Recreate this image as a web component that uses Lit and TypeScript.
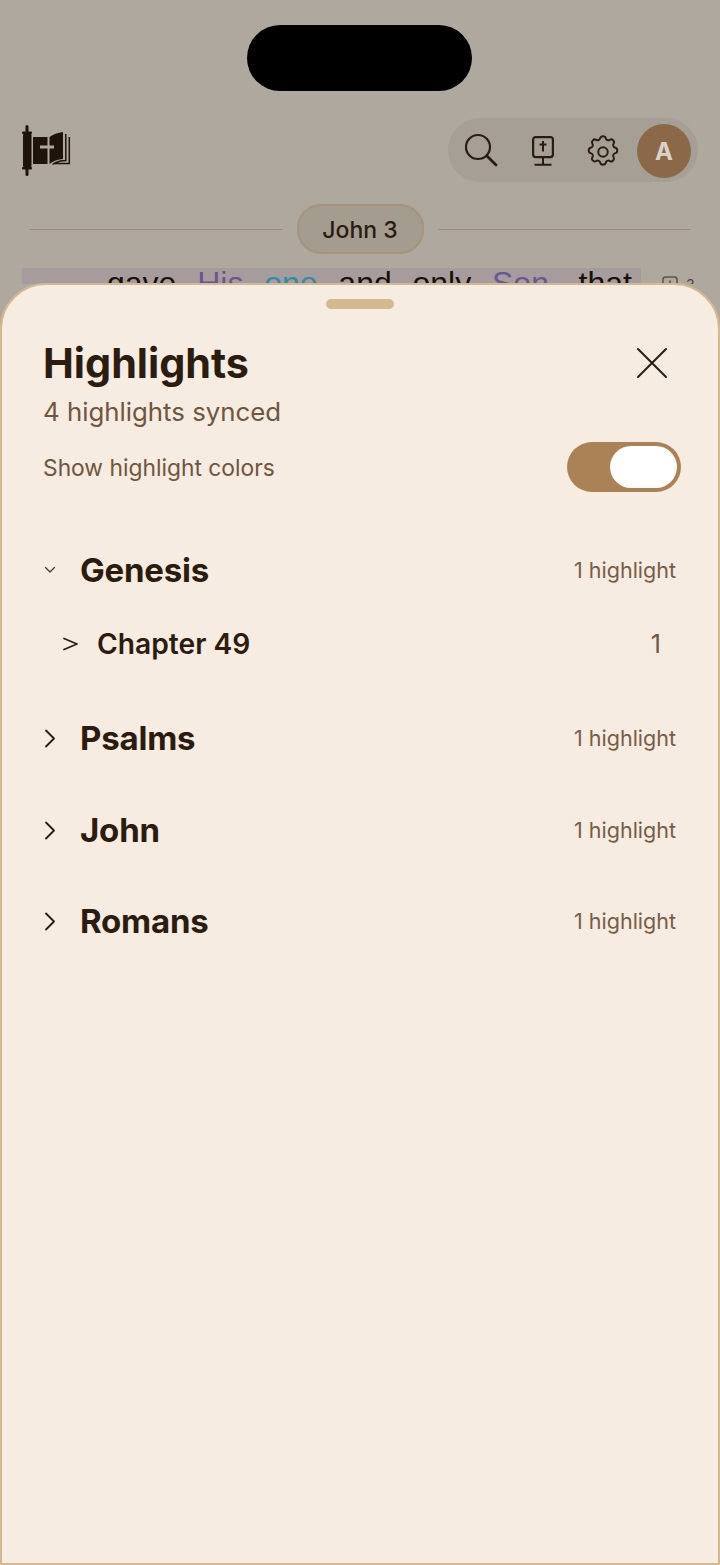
import { LitElement, html, css, svg } from "lit";
import { customElement } from "lit/decorators.js";

const chevronRight = svg`<path d="M2 1.5 L10 9.5 L2 17.5" fill="none" stroke="#2c1c10" stroke-width="1.800" stroke-linecap="round" stroke-linejoin="round"/>`;

@customElement("app-root")
export class AppRoot extends LitElement {
  static styles = css`
    :host { display: block; width: 720px; height: 1565px; position: relative; overflow: hidden; background: #aea89e; font-family: Inter, "Liberation Sans", sans-serif; color: #2c1c10; }
    .back { display: flex; flex-direction: column; height: 284px; overflow: hidden; }
    .island { width: 225px; height: 66px; border-radius: 33px; background: #000; margin: 25px 0 0 247px; flex: none; }
    .top { display: flex; justify-content: space-between; align-items: center; margin-top: 27px; padding: 0 22px; height: 64px; flex: none; }
    .logo { display: block; margin-top: 1px; }
    .tools { width: 250px; height: 64px; border-radius: 32px; background: #a59f95; display: flex; align-items: center; position: relative; }
    .tool { position: absolute; top: 50%; transform: translate(-50%, -50%); display: block; }
    .t-search { left: 33px; }
    .t-screen { left: 94.5px; top: 51%; }
    .t-gear { left: 155px; top: 53%; }
    .avatar { position: absolute; left: 189px; top: 6px; width: 54px; height: 54px; border-radius: 50%; background: #8a6848; color: #d9d2c8; font-size: 24px; font-weight: 700; display: flex; align-items: center; justify-content: center; }
    .chapter { display: flex; align-items: center; padding: 0 29px; margin-top: 22px; height: 50px; flex: none; }
    .rule { flex: 1; height: 1px; background: #9a8d76; }
    .pill { width: 127px; height: 50px; margin: 0 14px; padding-top: 1px; box-sizing: border-box; border: 2px solid #a8937a; border-radius: 24px; background: #a59c90; display: flex; align-items: center; justify-content: center; font-size: 23px; font-weight: 500; color: #2c1c10; }
    .verse { display: flex; margin-top: 14px; padding-left: 22px; flex: none; height: 40px; }
    .line { width: 619px; height: 40px; background: #a69c9e; display: flex; justify-content: space-between; box-sizing: border-box; padding: 0 9px 0 85px; font-family: "Liberation Sans", sans-serif; font-size: 32px; line-height: 30px; color: #17110c; }
    .purple { color: #6a5596; }
    .teal { color: #2a8ca6; }
    .note { display: flex; margin-left: 21px; margin-top: 8px; gap: 8px; color: #4a4036; font-size: 14px; }
    .note svg { display: block; }

    .sheet { position: absolute; left: 0; right: 0; top: 283px; bottom: 0; box-sizing: border-box; background: #f6ece1; border: 2px solid #d5b88f; border-radius: 46px 46px 0 0; padding: 14px 42px 0 41px; display: flex; flex-direction: column; }
    .handle { width: 68px; height: 10px; border-radius: 5px; background: #d5b88f; align-self: center; flex: none; margin-left: 1px; }
    .head { display: flex; justify-content: space-between; align-items: flex-start; margin-top: 32px; }
    h1 { margin: 0; font-size: 41.3px; line-height: 44px; font-weight: 700; color: #2c1c10; }
    .close { display: block; margin: 6px 8px 0 0; }
    .sub { font-size: 25.8px; line-height: 34px; margin-top: 10px; color: #70553f; }
    .toggle-row { display: flex; justify-content: space-between; align-items: center; margin-top: 13px; height: 50px; }
    .toggle-label { font-size: 22.8px; color: #70553f; }
    .toggle { width: 114px; height: 50px; margin-right: -5px; border-radius: 25px; background: #ab8256; padding: 4px; box-sizing: border-box; display: flex; justify-content: flex-end; }
    .knob { width: 67px; height: 42px; border-radius: 21px; background: #fff; }
    .books { display: flex; flex-direction: column; margin: 56px 0 0 1px; }
    .book { display: flex; align-items: center; height: 44px; }
    .chev { width: 36px; flex: none; display: flex; }
    .name { flex: 1; font-size: 33px; font-weight: 700; letter-spacing: -0.2px; color: #2c1c10; }
    .count { font-size: 21.5px; color: #775c47; }
    .chap { display: flex; align-items: center; height: 44px; padding-left: 19px; margin-top: 30px; }
    .chap .chev { width: 34px; }
    .chap-name { flex: 1; font-size: 28.2px; font-weight: 600; color: #2c1c10; }
    .chap-count { font-size: 25px; color: #70553f; margin-right: 15px; }
    .gap-a { margin-top: 50px; }
    .gap-b { margin-top: 48px; }
    .gap-c { margin-top: 47px; }
  `;

  private book(name: string, extra = "", open = false) {
    return html`<div class="book ${extra}">
      <span class="chev">
        ${open
          ? html`<svg width="12" height="8" viewBox="0 0 12 8"><path d="M1.5 1.5 L6 6 L10.5 1.5" fill="none" stroke="#4a3828" stroke-width="1.3" stroke-linecap="round" stroke-linejoin="round"/></svg>`
          : html`<svg width="12" height="19" viewBox="0 0 12 19">${chevronRight}</svg>`}
      </span>
      <span class="name">${name}</span>
      <span class="count">1 highlight</span>
    </div>`;
  }

  render() {
    return html`
      <div class="back">
        <div class="island"></div>
        <div class="top">
          <svg class="logo" width="50" height="52" viewBox="0 0 50 52">
            <g fill="#1f140b">
              <rect x="3.500" y="0" width="3" height="9" rx="1.500"/>
              <rect x="0" y="6.500" width="10" height="2.500" rx="1"/>
              <rect x="1" y="9" width="8.500" height="33" rx="1"/>
              <rect x="0" y="42" width="10" height="2.500" rx="1"/>
              <rect x="3.500" y="42" width="3" height="9" rx="1.500"/>
              <path d="M11 12 H25.500 V39 H11 Z"/>
              <path d="M27.500 12 C31 9.500 36 7.500 41 7 V34 C36 34.500 31 36 27.500 39 Z"/>
            </g>
            <rect x="18" y="20.500" width="14" height="3" fill="#aea89e"/>
            <path d="M43.800 9 V35.500 C38 35.500 34 37 30.500 39.500 M47.300 12 V38.500 H32" fill="none" stroke="#1f140b" stroke-width="1.500"/>
          </svg>
          <div class="tools">
            <svg class="tool t-search" width="34" height="34" viewBox="0 0 34 34">
              <circle cx="14" cy="14" r="12" fill="none" stroke="#2c1c10" stroke-width="2.200"/>
              <path d="M23 23 L32 32" stroke="#2c1c10" stroke-width="2.800" stroke-linecap="round"/>
            </svg>
            <svg class="tool t-screen" width="22" height="30" viewBox="0 0 22 30">
              <rect x="1.100" y="1.100" width="19.800" height="20" rx="2.500" fill="none" stroke="#2c1c10" stroke-width="2.200"/>
              <path d="M11 5 V15.500 M7.500 8.500 H14.500" stroke="#2c1c10" stroke-width="2"/>
              <path d="M11 21 V28 M2.500 28.700 H19.500" stroke="#2c1c10" stroke-width="2" fill="none"/>
            </svg>
            <svg class="tool t-gear" width="38" height="38" viewBox="0 0 24 24" fill="none" stroke="#2c1c10" stroke-width="1.250" stroke-linecap="round" stroke-linejoin="round">
              <path d="M10.3 3.2c.4-1.6 3-1.600 3.400 0a1.700 1.700 0 0 0 2.600 1.100c1.400-.9 3.300 .8 2.400 2.400a1.700 1.700 0 0 0 1.100 2.600c1.600 .4 1.600 3 0 3.400a1.700 1.700 0 0 0-1.100 2.600c.9 1.400-.8 3.300-2.400 2.400a1.700 1.700 0 0 0-2.600 1.100c-.4 1.600-3 1.600-3.400 0a1.700 1.700 0 0 0-2.600-1.100c-1.400 .9-3.300-.8-2.400-2.400a1.700 1.700 0 0 0-1.100-2.600c-1.600-.4-1.600-3 0-3.400a1.700 1.700 0 0 0 1.100-2.600c-.9-1.400 .8-3.300 2.400-2.400 1 .6 2.300 .1 2.600-1.100z"/>
              <circle cx="12" cy="12" r="3"/>
            </svg>
            <div class="avatar">A</div>
          </div>
        </div>
        <div class="chapter">
          <div class="rule"></div>
          <div class="pill">John 3</div>
          <div class="rule"></div>
        </div>
        <div class="verse">
          <div class="line">
            <span>gave</span><span class="purple">His</span><span class="teal">one</span><span>and</span><span>only</span><span class="purple">Son,</span><span>that</span>
          </div>
          <div class="note">
            <svg width="16" height="16" viewBox="0 0 16 16"><rect x="1" y="1" width="14" height="14" rx="2.500" fill="none" stroke="#5d5347" stroke-width="1.500"/><path d="M8 4.500 V11.500 M4.500 8 H11.500" stroke="#5d5347" stroke-width="1.500"/></svg>
            <span>3</span>
          </div>
        </div>
      </div>

      <section class="sheet">
        <div class="handle"></div>
        <div class="head">
          <h1>Highlights</h1>
          <svg class="close" width="32" height="32" viewBox="0 0 32 32">
            <path d="M2 2 L30 30 M30 2 L2 30" stroke="#2c1c10" stroke-width="2" stroke-linecap="round"/>
          </svg>
        </div>
        <div class="sub">4 highlights synced</div>
        <div class="toggle-row">
          <span class="toggle-label">Show highlight colors</span>
          <div class="toggle"><div class="knob"></div></div>
        </div>
        <div class="books">
          ${this.book("Genesis", "", true)}
          <div class="chap">
            <span class="chev"><svg width="15" height="14" viewBox="0 0 15 14"><path d="M1 1.500 L14 7 L1 12.500" fill="none" stroke="#2c1c10" stroke-width="1.700" stroke-linecap="round" stroke-linejoin="round"/></svg></span>
            <span class="chap-name">Chapter 49</span>
            <span class="chap-count">1</span>
          </div>
          ${this.book("Psalms", "gap-a")}
          ${this.book("John", "gap-b")}
          ${this.book("Romans", "gap-c")}
        </div>
      </section>
    `;
  }
}
